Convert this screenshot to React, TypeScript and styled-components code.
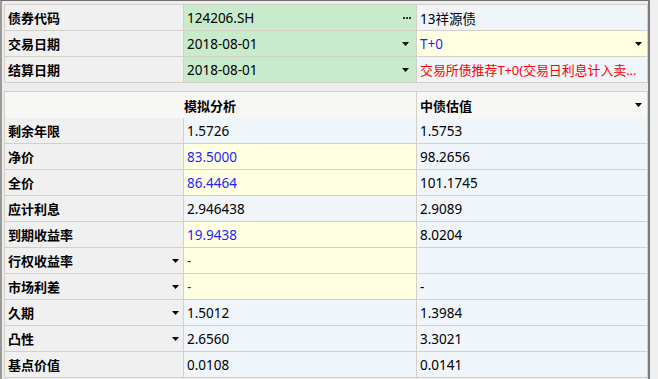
import React from "react";
import styled, { createGlobalStyle } from "styled-components";

const GlobalStyle = createGlobalStyle`
  html, body {
    margin: 0;
    padding: 0;
    background: #f0f0f0;
  }
  body {
    font-family: "Noto Sans", "Noto Sans CJK SC", sans-serif;
  }
`;

const LINE = "#d4d0c8";

const Frame = styled.div`
  width: 650px;
  height: 379px;
  box-sizing: border-box;
  border-top: 1px solid #6f6f6f;
  border-left: 2px solid #9a9a9a;
  border-right: 2px solid #7c7c7c;
  padding: 3px 0 0 2px;
  background: #ececec;
  display: flex;
  flex-direction: column;
  gap: 8px;
  overflow: hidden;
`;

const Grid = styled.div`
  display: grid;
  grid-template-columns: 178px 232px 230px;
  grid-auto-rows: 25px;
  gap: 1px;
  padding: 1px;
  background: ${LINE};
  width: 644px;
  box-sizing: border-box;
`;

const Cell = styled.div<{ $bg?: string; $color?: string; $padR?: number }>`
  display: flex;
  align-items: center;
  justify-content: space-between;
  gap: 4px;
  padding: 0 ${(p) => p.$padR ?? 4}px 0 3px;
  background: ${(p) => p.$bg ?? "#f0f5fa"};
  color: ${(p) => p.$color ?? "#000"};
  font-size: 13.5px;
  white-space: nowrap;
  overflow: hidden;
  min-width: 0;
`;

const Label = styled(Cell)`
  background: #f0f0f0;
  font-family: "Noto Sans CJK SC", sans-serif;
  font-weight: bold;
  font-size: 13px;
  padding-left: 3px;
`;

const HeadCell = styled(Cell)<{ $span?: number; $center?: boolean }>`
  grid-column: span ${(p) => p.$span ?? 1};
  justify-content: ${(p) => (p.$center ? "center" : "space-between")};
  background: #f7f7f5;
  font-family: "Noto Sans CJK SC", sans-serif;
  font-weight: bold;
  font-size: 13px;
  height: 26px;
`;

const Text = styled.span`
  overflow: hidden;
  text-overflow: ellipsis;
  min-width: 0;
`;

const Note = styled.span`
  font-size: 13px;
  letter-spacing: -0.1px;
`;

const Arrow = () => (
  <svg width="7" height="4" viewBox="0 0 7 4" style={{ flexShrink: 0 }}>
    <path d="M0 0 H7 L3.5 4 Z" fill="#000" />
  </svg>
);

const Dots = () => (
  <svg width="8" height="2" viewBox="0 0 8 2" style={{ flexShrink: 0 }}>
    <rect x="0" y="0" width="2" height="2" fill="#333" />
    <rect x="3" y="0" width="2" height="2" fill="#333" />
    <rect x="6" y="0" width="2" height="2" fill="#333" />
  </svg>
);

const GREEN = "#c7ebcb";
const YELLOW = "#ffffe1";
const BLUE_BG = "#f0f5fa";
const BLUE_TXT = "#1f1fff";

type Row = {
  label: string;
  menu?: boolean;
  sim: string;
  simEdit?: boolean;
  val: string;
};

const rows: Row[] = [
  { label: "剩余年限", sim: "1.5726", val: "1.5753" },
  { label: "净价", sim: "83.5000", simEdit: true, val: "98.2656" },
  { label: "全价", sim: "86.4464", simEdit: true, val: "101.1745" },
  { label: "应计利息", sim: "2.946438", val: "2.9089" },
  { label: "到期收益率", sim: "19.9438", simEdit: true, val: "8.0204" },
  { label: "行权收益率", menu: true, sim: "-", simEdit: true, val: "" },
  { label: "市场利差", menu: true, sim: "-", simEdit: true, val: "-" },
  { label: "久期", menu: true, sim: "1.5012", val: "1.3984" },
  { label: "凸性", menu: true, sim: "2.6560", val: "3.3021" },
  { label: "基点价值", sim: "0.0108", val: "0.0141" },
];

export default function App() {
  return (
    <>
      <GlobalStyle />
      <Frame>
        <Grid>
          <Label>债券代码</Label>
          <Cell $bg={GREEN} $padR={5}>
            <Text>124206.SH</Text>
            <Dots />
          </Cell>
          <Cell $bg={BLUE_BG}>
            <Text>13祥源债</Text>
          </Cell>

          <Label>交易日期</Label>
          <Cell $bg={GREEN} $padR={7}>
            <Text>2018-08-01</Text>
            <Arrow />
          </Cell>
          <Cell $bg={YELLOW} $color={BLUE_TXT} $padR={5}>
            <Text>T+0</Text>
            <Arrow />
          </Cell>

          <Label>结算日期</Label>
          <Cell $bg={GREEN} $padR={7}>
            <Text>2018-08-01</Text>
            <Arrow />
          </Cell>
          <Cell $bg={BLUE_BG} $color="#ff0000" $padR={2}>
            <Note>交易所债推荐T+0(交易日利息计入卖...</Note>
          </Cell>
        </Grid>

        <Grid>
          <HeadCell $span={2} $center>
            模拟分析
          </HeadCell>
          <HeadCell $padR={5}>
            <Text>中债估值</Text>
            <Arrow />
          </HeadCell>
          {rows.map((r) => (
            <React.Fragment key={r.label}>
              <Label>
                <Text>{r.label}</Text>
                {r.menu && <Arrow />}
              </Label>
              <Cell
                $bg={r.simEdit ? YELLOW : BLUE_BG}
                $color={r.simEdit ? BLUE_TXT : "#000"}
              >
                <Text>{r.sim}</Text>
              </Cell>
              <Cell $bg={BLUE_BG}>
                <Text>{r.val}</Text>
              </Cell>
            </React.Fragment>
          ))}
        </Grid>
      </Frame>
    </>
  );
}
